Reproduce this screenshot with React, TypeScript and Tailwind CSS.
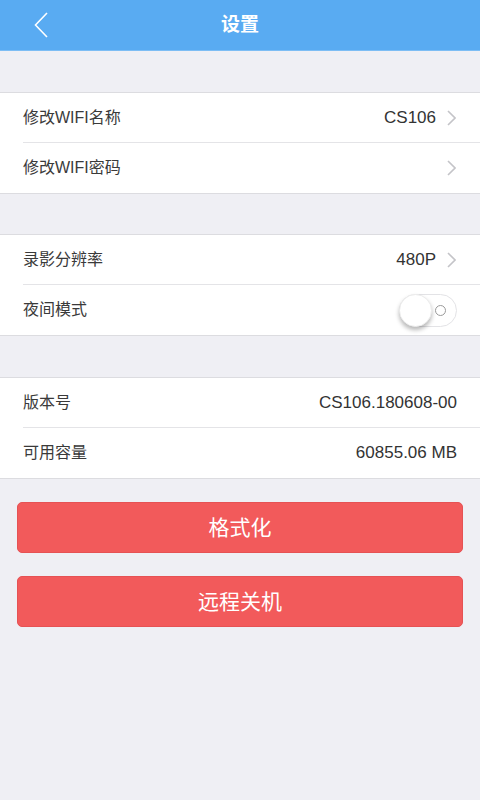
import { ReactNode } from 'react';

const font = { fontFamily: '"Liberation Sans", "Noto Sans CJK SC", sans-serif' };

function Chevron() {
  return (
    <svg width="9" height="16" viewBox="0 0 9 16" className="ml-[11px] shrink-0">
      <path d="M1 1 L8 8 L1 15" fill="none" stroke="#c4c4c8" strokeWidth="1.6" />
    </svg>
  );
}

function Toggle() {
  return (
    <div className="relative w-[58px] h-[33px] rounded-full bg-white border border-[#e3e3e6] flex items-center justify-end pr-[10px]">
      <div className="w-[11px] h-[11px] rounded-full border-[1.5px] border-[#9a9a9a]" />
      <div className="absolute -left-px -top-px w-[33px] h-[33px] rounded-full bg-white shadow-[0_3px_4px_rgba(0,0,0,0.28)] border border-[#ececec]" />
    </div>
  );
}

interface RowProps {
  label: string;
  children?: ReactNode;
  last?: boolean;
}

function Row({ label, children, last }: RowProps) {
  return (
    <div className="pl-[23px]">
      <div
        className={
          'h-[50px] flex items-center justify-between pr-[24px] ' +
          (last ? '' : 'border-b border-[#e4e4e7]')
        }
      >
        <span className="text-[16px] text-[#3a3a3a]">{label}</span>
        <div className="flex items-center text-[17px] text-[#333]">{children}</div>
      </div>
    </div>
  );
}

function Section({ children, top }: { children: ReactNode; top: string }) {
  return <div className={top + ' bg-white border-y border-[#dcdce0]'}>{children}</div>;
}

export default function App() {
  return (
    <div className="w-[480px] h-[800px] bg-[#efeff4] flex flex-col" style={font}>
      {/* Header */}
      <div className="h-[51px] bg-[#59abf2] relative flex items-center justify-center border-b border-[#7dbdf4]">
        <svg
          width="14"
          height="26"
          viewBox="0 0 14 26"
          className="absolute left-[34px] top-[12px]"
        >
          <path d="M13 1 L1.5 13 L13 25" fill="none" stroke="#fff" strokeWidth="1.6" />
        </svg>
        <span className="text-white text-[19px] font-bold">设置</span>
      </div>

      <Section top="mt-[41px]">
        <Row label="修改WIFI名称">
          CS106
          <Chevron />
        </Row>
        <Row label="修改WIFI密码" last>
          <Chevron />
        </Row>
      </Section>

      <Section top="mt-[40px]">
        <Row label="录影分辨率">
          480P
          <Chevron />
        </Row>
        <Row label="夜间模式" last>
          <div className="-mr-px">
            <Toggle />
          </div>
        </Row>
      </Section>

      <Section top="mt-[41px]">
        <Row label="版本号">
          <span className="-mr-px">CS106.180608-00</span>
        </Row>
        <Row label="可用容量" last>
          <span className="-mr-px">60855.06 MB</span>
        </Row>
      </Section>

      {/* Actions */}
      <div className="px-[17px] pt-[23px] flex flex-col gap-[23px]">
        <button className="h-[51px] rounded-[5px] bg-[#f25a5b] border border-[#e65254] text-white text-[21px]">
          格式化
        </button>
        <button className="h-[51px] rounded-[5px] bg-[#f25a5b] border border-[#e65254] text-white text-[21px]">
          远程关机
        </button>
      </div>
    </div>
  );
}
